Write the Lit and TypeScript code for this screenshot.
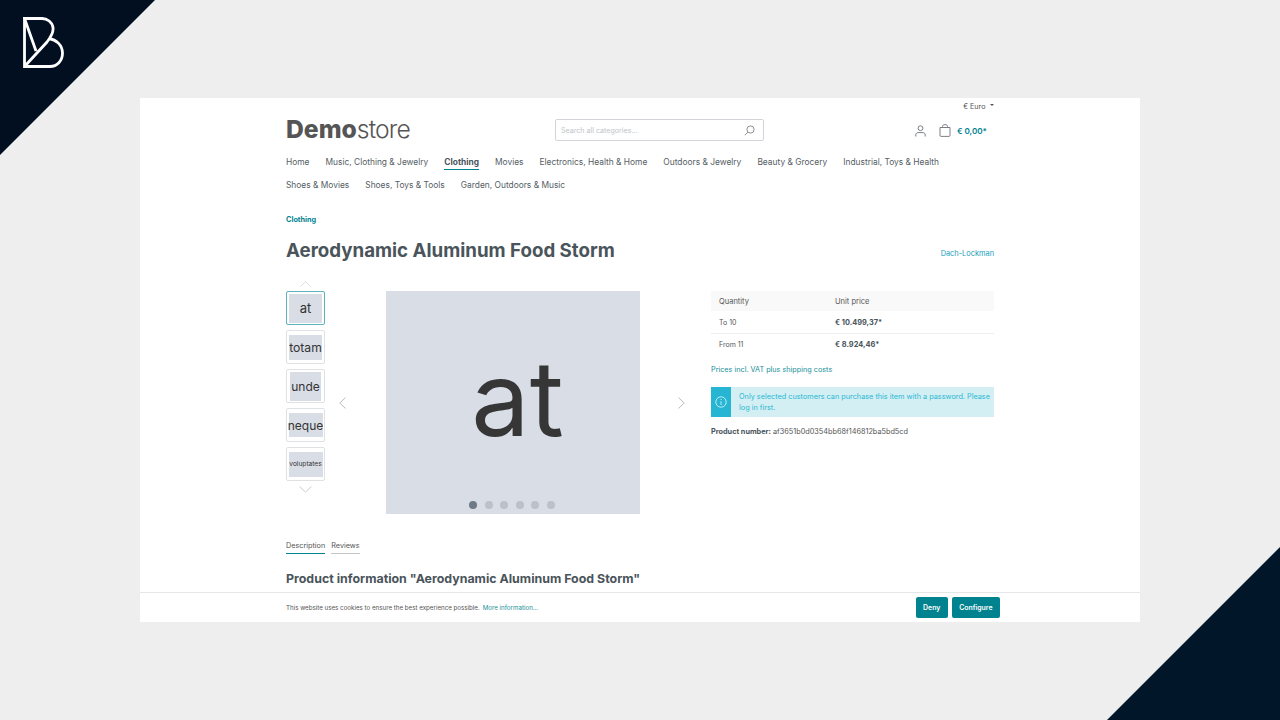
import { LitElement, html, css } from "lit";
import { customElement } from "lit/decorators.js";

const nav1 = ["Home","Music, Clothing & Jewelry","Clothing","Movies","Electronics, Health & Home","Outdoors & Jewelry","Beauty & Grocery","Industrial, Toys & Health"];
const nav2 = ["Shoes & Movies","Shoes, Toys & Tools","Garden, Outdoors & Music"];
const thumbs: [string, number, number, number][] = [
  ["at", 33, 29, 13], ["totam", 33, 25, 12.2], ["unde", 31, 29, 12], ["neque", 34, 24, 12], ["voluptates", 34, 25, 6.6],
];

@customElement("app-root")
export class AppRoot extends LitElement {
  static styles = css`
    :host { display: block; width: 1280px; height: 720px; background: #eeeeee; position: relative; overflow: hidden; font-family: Inter, "Liberation Sans", sans-serif; color: #4a545b; }
    * { box-sizing: border-box; }
    .corner { position: absolute; display: block; }
    .tl { left: 0; top: 0; }
    .br { right: 0; bottom: 0; }
    .logo { position: absolute; left: 23px; top: 17px; }
    .stage { padding-top: 98px; display: flex; justify-content: center; }
    .card { width: 1000px; height: 524px; background: #fff; position: relative; overflow: hidden; padding: 0 146px; }
    .top { height: 16px; display: flex; justify-content: flex-end; align-items: center; gap: 4.5px; font-size: 7.2px; color: #555; }
    .caret { width: 0; height: 0; border-left: 2.5px solid transparent; border-right: 2.5px solid transparent; border-top: 2.5px solid #555; margin-top: -2px; }
    .header { height: 27px; margin-top: 3px; display: flex; align-items: center; position: relative; }
    .brand { font-size: 24.7px; color: #555; font-weight: 800; width: 269px; line-height: 1; margin-top: -3px; }
    .brand span { font-weight: 300; letter-spacing: -0.85px; }
    .search { width: 209px; height: 22px; border: 1px solid #d1d5d9; border-radius: 2px; display: flex; align-items: center; justify-content: space-between; padding: 0 8px 0 5px; font-size: 7.1px; color: #c0c4c8; margin-top: -1px; }
    .actions { margin-left: auto; display: flex; align-items: center; font-size: 8.1px; font-weight: 600; color: #00838f; padding-right: 7px; }
    .actions svg { display: block; }
    .bag { margin-left: 13px; margin-right: 6px; }
    .nav { margin-top: 8.5px; display: flex; flex-wrap: wrap; column-gap: 16.05px; font-size: 8.4px; color: #555e65; }
    .nav a { height: 23px; padding-top: 3px; line-height: 12px; position: relative; white-space: nowrap; }
    .nav a.on { font-weight: 700; color: #4a545b; }
    .nav a.on::after { content: ""; position: absolute; left: 0; right: 0; top: 16.5px; height: 1px; background: #00838f; }
    .crumb { margin-top: 15.5px; font-size: 7.3px; font-weight: 700; color: #00838f; line-height: 12px; }
    .titlerow { margin-top: 13px; display: flex; justify-content: space-between; align-items: center; height: 24px; }
    h1 { margin: 0; font-size: 18.7px; font-weight: 700; color: #4a545b; line-height: 24px; }
    .maker { font-size: 7.4px; color: #189eb8; padding-top: 5px; }
    .main { margin-top: 28px; display: flex; height: 223px; }
    .gallery { width: 354px; display: flex; position: relative; }
    .thumbs { width: 39px; display: flex; flex-direction: column; gap: 5px; position: relative; }
    .thumb { width: 39px; height: 34px; border: 1px solid #dfe1e4; border-radius: 2px; display: flex; align-items: center; justify-content: center; }
    .thumb.on { border-color: #5eb2bb; }
    .tbox { background: #d9dde6; display: flex; align-items: center; justify-content: center; color: #333; white-space: nowrap; }
    .chev { position: absolute; display: block; }
    .up { left: 14px; top: -10px; }
    .down { left: 13px; top: 195px; }
    .image { margin-left: 61px; width: 254px; height: 223px; background: #d9dde6; display: flex; align-items: center; justify-content: center; position: relative; font-size: 104px; color: #363636; padding: 0 0 0 9px; line-height: 1; }
    .image span { margin-top: -9px; font-weight: 420; }
    .dots { position: absolute; left: 83px; bottom: 5px; display: flex; gap: 7.6px; }
    .dot { width: 8px; height: 8px; border-radius: 50%; background: #bcc1c9; }
    .dot.on { background: #6f7a87; }
    .left { left: 53px; top: 106px; }
    .right { left: 392px; top: 106px; }
    .buy { margin-left: 71px; width: 283px; }
    .th { height: 20px; background: #f9f9f9; display: flex; align-items: center; font-size: 7.5px; color: #555; padding-left: 8px; }
    .row { display: flex; align-items: center; height: 22px; font-size: 7px; color: #555; padding-left: 8px; }
    .row + .row { border-top: 1px solid #eceeef; }
    .c1 { width: 116px; }
    .row b { font-size: 7.4px; font-weight: 700; color: #4a545b; }
    .tax { margin-top: 10px; font-size: 7.25px; color: #189099; line-height: 10px; }
    .alert { margin-top: 12px; height: 30px; background: #d3eff4; display: flex; color: #2ab8d2; font-size: 7.3px; line-height: 11px; }
    .aicon { width: 20px; background: #26b6d4; display: flex; align-items: center; justify-content: center; flex: none; }
    .atext { padding: 4px 0 0 8px; }
    .pn { margin-top: 10px; font-size: 7.3px; color: #555; line-height: 10px; white-space: nowrap; }
    .pn b { font-weight: 700; color: #4a545b; }
    .tabs { margin-top: 26px; display: flex; gap: 6px; font-size: 7.25px; color: #555; }
    .tab { padding-bottom: 2px; line-height: 11px; border-bottom: 1px solid #c3c7ca; }
    .tab.on { border-bottom-color: #00838f; }
    h2 { margin: 16.5px 0 0; font-size: 12.4px; font-weight: 700; color: #4a545b; line-height: 16px; white-space: nowrap; }
    .cookie { position: absolute; left: 0; right: 0; bottom: 0; height: 30px; background: #fff; border-top: 1px solid #e4e6e8; display: flex; align-items: center; padding: 0 140px 0 146px; font-size: 6.2px; color: #555; }
    .cookie a { color: #1a8f98; margin-left: 3px; }
    .btns { margin-left: auto; display: flex; gap: 4px; }
    .btn { height: 21px; background: #00838f; color: #fff; border-radius: 2px; font-size: 6.9px; font-weight: 600; display: flex; align-items: center; padding: 0 7.5px; }
  `;

  render() {
    return html`
      <svg class="corner tl" width="156" height="156" viewBox="0 0 156 156"><polygon points="0,0 155,0 0,155" fill="#010f20"/></svg>
      <svg class="logo" width="42" height="52" viewBox="0 0 42 52" fill="none" stroke="#fff" stroke-width="2.8">
        <path d="M1.5 1.5V49.5H27C34 49.5 39.5 44 39.5 36C39.5 28 33 22.5 26 21.5M1.5 49.5L24 25C28 20 30.5 15 30 11C29.5 5 24 1.5 19 1.5H1.5L13 34"/>
      </svg>
      <svg class="corner br" width="174" height="174" viewBox="0 0 174 174"><polygon points="174,1 174,174 1,174" fill="#011629"/></svg>
      <div class="stage"><div class="card">
        <div class="top"><span>€ Euro</span><i class="caret"></i></div>
        <div class="header">
          <div class="brand">Demo<span>store</span></div>
          <div class="search"><span>Search all categories...</span>
            <svg width="11" height="11" viewBox="0 0 11 11" fill="none" stroke="#6b7278" stroke-width=".8"><circle cx="6.5" cy="4.5" r="3.6"/><path d="M3.8 7.2L.8 10.2"/></svg>
          </div>
          <div class="actions">
            <svg width="11" height="12" viewBox="0 0 11 12" fill="none" stroke="#6b7278" stroke-width=".9"><circle cx="5.5" cy="3.2" r="2.4"/><path d="M.8 11.5V9.8C.8 8.4 2 7.6 3 7.6H8C9 7.6 10.2 8.4 10.2 9.8V11.5"/></svg>
            <svg class="bag" width="12" height="13" viewBox="0 0 12 13" fill="none" stroke="#6b7278" stroke-width=".9"><path d="M1 3.5H11V11.5C11 12 10.6 12.4 10 12.4H2C1.4 12.4 1 12 1 11.5ZM3.5 3.5V2.5C3.5 1.4 4.4.6 6 .6S8.5 1.4 8.5 2.5V3.5"/></svg>
            <span>€ 0,00*</span>
          </div>
        </div>
        <div class="nav">
          ${nav1.map((n) => html`<a class="${n === "Clothing" ? "on" : ""}">${n}</a>`)}
          ${nav2.map((n) => html`<a>${n}</a>`)}
        </div>
        <div class="crumb">Clothing</div>
        <div class="titlerow"><h1>Aerodynamic Aluminum Food Storm</h1><span class="maker">Dach-Lockman</span></div>
        <div class="main">
          <div class="gallery">
            <div class="thumbs">
              <svg class="chev up" width="11" height="6" viewBox="0 0 11 6" fill="none" stroke="#dcdfe2"><path d="M.5 5.5L5.5.5L10.5 5.5"/></svg>
              ${thumbs.map(([t, w, h, fs], i) => html`<div class="thumb ${i === 0 ? "on" : ""}"><div class="tbox" style="width:${w}px;height:${h}px;font-size:${fs}px">${t}</div></div>`)}
              <svg class="chev down" width="13" height="7" viewBox="0 0 13 7" fill="none" stroke="#c8ccd0"><path d="M.5 .5L6.5 6L12.5 .5"/></svg>
            </div>
            <svg class="chev left" width="7" height="12" viewBox="0 0 7 12" fill="none" stroke="#b9bdc1"><path d="M6.5 .5L.8 6L6.5 11.5"/></svg>
            <div class="image"><span>at</span>
              <div class="dots">${[0,1,2,3,4,5].map((i) => html`<i class="dot ${i === 0 ? "on" : ""}"></i>`)}</div>
            </div>
            <svg class="chev right" width="7" height="12" viewBox="0 0 7 12" fill="none" stroke="#b9bdc1"><path d="M.5 .5L6.2 6L.5 11.5"/></svg>
          </div>
          <div class="buy">
            <div class="th"><span class="c1">Quantity</span><span>Unit price</span></div>
            <div class="row"><span class="c1">To 10</span><b>€ 10.499,37*</b></div>
            <div class="row"><span class="c1">From 11</span><b>€ 8.924,46*</b></div>
            <div class="tax">Prices incl. VAT plus shipping costs</div>
            <div class="alert">
              <div class="aicon"><svg width="12" height="12" viewBox="0 0 12 12" fill="none" stroke="#e8f8fb" stroke-width=".8"><circle cx="6" cy="6" r="5.2"/><path d="M6 5.2V9M6 3V4"/></svg></div>
              <div class="atext">Only selected customers can purchase this item with a password. Please log in first.</div>
            </div>
            <div class="pn"><b>Product number:</b> af3651b0d0354bb68f146812ba5bd5cd</div>
          </div>
        </div>
        <div class="tabs"><span class="tab on">Description</span><span class="tab">Reviews</span></div>
        <h2>Product information "Aerodynamic Aluminum Food Storm"</h2>
        <div class="cookie">
          <span>This website uses cookies to ensure the best experience possible.</span><a>More information...</a>
          <div class="btns"><span class="btn">Deny</span><span class="btn">Configure</span></div>
        </div>
      </div></div>
    `;
  }
}
